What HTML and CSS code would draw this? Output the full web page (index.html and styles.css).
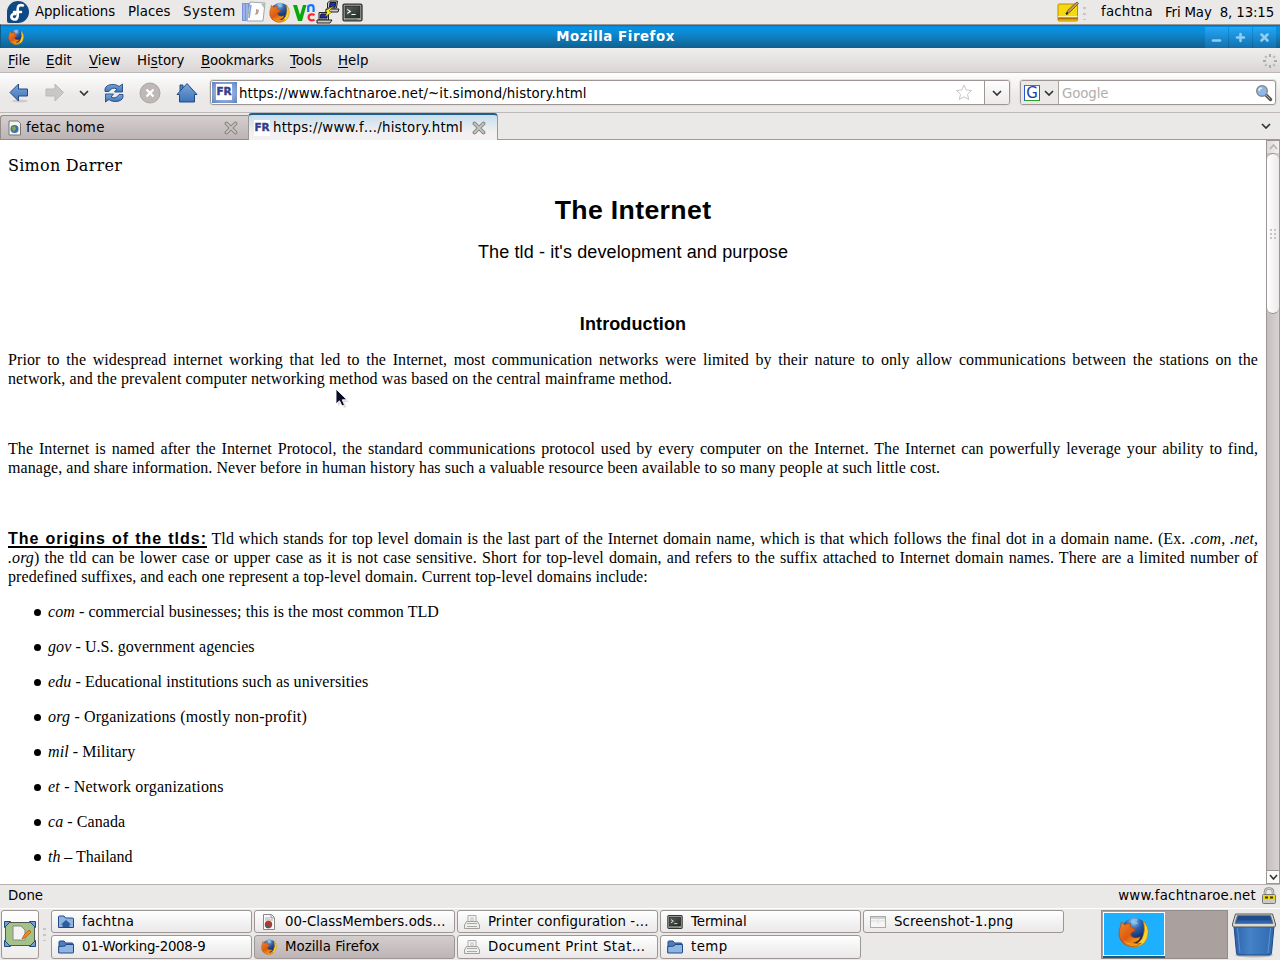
FILE: index.html
```
<!DOCTYPE html>
<html lang="en">
<head>
<meta charset="utf-8">
<title>Mozilla Firefox</title>
<link rel="stylesheet" href="styles.css">
</head>
<body>
<svg class="defs" width="0" height="0">
  <defs>
    <radialGradient id="globe" cx=".45" cy=".15" r=".75"><stop offset="0" stop-color="#8cc4f0"/><stop offset=".4" stop-color="#2b62ad"/><stop offset="1" stop-color="#0c1c58"/></radialGradient>
    <linearGradient id="flame" x1="0" y1="0" x2=".8" y2="1"><stop offset="0" stop-color="#f08a2a"/><stop offset=".55" stop-color="#dd5a10"/><stop offset="1" stop-color="#f9b21c"/></linearGradient>
    <linearGradient id="blue" x1="0" y1="0" x2="0" y2="1"><stop offset="0" stop-color="#7ba6d8"/><stop offset="1" stop-color="#3e74b8"/></linearGradient>
    <linearGradient id="bin" x1="0" y1="0" x2="1" y2="0"><stop offset="0" stop-color="#2c62a8"/><stop offset=".4" stop-color="#4582c8"/><stop offset="1" stop-color="#3068b0"/></linearGradient>
    <linearGradient id="screen" x1="0" y1="0" x2="1" y2="1"><stop offset="0" stop-color="#5a625c"/><stop offset="1" stop-color="#232a26"/></linearGradient>
  </defs>
  <symbol id="fox" viewBox="0 0 32 32">
    <circle cx="17" cy="14.500" r="13.500" fill="url(#globe)"/>
    <path d="M13 3q5-2 8-1l-2 3 2 2-4 1-3-2z" fill="#9accf0" opacity=".6"/>
    <path d="M26 4q6 6 5 13-1 10-9 13-6 2-11 0 10-1 14-8 4-9 1-18z" fill="#fbd22c" stroke="#c97d12" stroke-width=".7"/>
    <path d="M2.500 10L3.500 5 7 8q3-1.500 6-1.500l-.5 3L18 13q0 2-3 2.500-3 2-1 4.500 4 3 9 .5-1 5-7 6 5 2 8 .5-4 4-10 3.500Q4 29.500 1.200 20 .5 14 2.500 10z" fill="url(#flame)" stroke="#a8450f" stroke-width=".7"/>
    <path d="M3 17q2 10 11 11-8 1-11-11z" fill="#fbb04a"/>
  </symbol>
  <symbol id="term" viewBox="0 0 20 20">
    <rect x="1" y="2" width="18" height="16" rx="1.300" fill="#a9aba6" stroke="#30332f" stroke-width="1.300"/>
    <rect x="3" y="4" width="14" height="11" fill="url(#screen)" stroke="#222" stroke-width=".8"/>
    <path d="M5 7l3 2-3 2M9 12h4" fill="none" stroke="#fff" stroke-width="1"/>
    <path d="M3 16.600h12" stroke="#777" stroke-width="1"/><circle cx="16.300" cy="16.400" r=".8" fill="#6ad42c"/>
  </symbol>
  <symbol id="folder" viewBox="0 0 16 16">
    <path d="M1 13V3q0-1 1-1h4l1.500 2H14q1 0 1 1v8z" fill="#4b7fbe" stroke="#204a87"/>
    <path d="M.7 14V7.500L7 7l1-1.500h7.500V13.500q0 .5-.5.500z" fill="#8eb5e2" stroke="#204a87"/>
  </symbol>
  <symbol id="home" viewBox="0 0 16 16">
    <path d="M.5 13.500V3q0-1 1-1H6l1.500 2H14.500q1 0 1 1v8.500z" fill="#8eb5e2" stroke="#204a87"/>
    <path d="M8 6l5 4.500h-1.500V13h-7v-2.500H3z" fill="#2f5d9c"/>
  </symbol>
  <symbol id="printer" viewBox="0 0 16 16">
    <path d="M4 8V1.500h8V8" fill="#f5f5f4" stroke="#aaa"/><path d="M6 4h4M6 6h4" stroke="#bbb"/>
    <path d="M2.500 7.500h11l2 3.500v3.500H.5V11z" fill="#eeeeec" stroke="#a0a09d"/>
    <path d="M3 9.500h10M3 12.500h10" stroke="#aaaaa6"/>
  </symbol>
  <symbol id="x" viewBox="0 0 14 14">
    <path d="M2.500 2.500l9 9M11.500 2.500l-9 9" stroke="#7d7f78" stroke-width="3.800" stroke-linecap="round"/>
    <path d="M2.500 2.500l9 9M11.500 2.500l-9 9" stroke="#c6c3c0" stroke-width="1.900" stroke-linecap="round"/>
  </symbol>
  <symbol id="down" viewBox="0 0 10 6"><path d="M1 1l4 4 4-4" fill="none" stroke="#333" stroke-width="1.700"/></symbol>
</svg>

<div class="desktop">
  <header class="panel">
    <svg class="fedora" width="22" height="22" viewBox="0 0 22 22"><path d="M11 0a11 11 0 1 1 0 22H2q-2 0-2-2v-9A11 11 0 0 1 11 0z" fill="#0f4a84"/><path d="M16 4.500q-5-1.500-5.300 3v7.500q-.4 3.800-3.700 3.500-3-.8-2.500-3.500.6-2.300 3.500-2M7 11h7" fill="none" stroke="#fff" stroke-width="2.600" stroke-linecap="round"/></svg>
    <span class="applications">Applications</span><span class="places">Places</span><span class="system">System</span>
    <svg width="24" height="22" viewBox="0 0 24 22"><path d="M0 2h12l-3 18H0z" fill="#7793dc"/><path d="M2 3v16M5 3v16M8 3v14" stroke="#c6d2f4"/><path d="M8 1l15 1-2 18H5z" fill="#fdfdfd" stroke="#9aa"/><path d="M19 3l4-1-1 5z" fill="#bbb"/><path d="M9 4L7 17" stroke="#7da0e0" stroke-width="1.500"/><path d="M14 8l3 1-1 4-3 1 1-3z" fill="#b99c94"/></svg>
    <svg class="launch-fox" width="21" height="21"><use href="#fox"/></svg>
    <svg class="vnc" width="24" height="22" viewBox="0 0 24 22"><path d="M0 4h4l3 10 3-10h3.500L9 20H5z" fill="#08a808"/><path d="M15.200 11V4.500M15.200 6q1-2 3.200-1.800 2.200.2 2.200 2.500V11" fill="none" stroke="#1673ff" stroke-width="2.200"/><path d="M21.500 14q-1.500-.9-3.200-.7-2.700.4-2.700 3t2.700 3q1.700.2 3.200-.7" fill="none" stroke="#ff2430" stroke-width="2.200"/></svg>
    <svg class="putty" width="24" height="24" viewBox="0 0 24 24"><g stroke="#111" stroke-width=".9"><path d="M10.500 3l2-2h8l-1 7h-9z" fill="#ccc"/><path d="M13 2.500h6l-1 4.500h-5.500z" fill="#1430c8"/><path d="M9 9h13l-1 3H9z" fill="#c9c9c9"/><path d="M2 12.500h9.500V20H2z" fill="#ccc"/><path d="M4 14h6v4H3z" fill="#1430c8"/><path d="M0 20h15l-2 3H0z" fill="#c9c9c9"/><path d="M18 5l-6 6 3 1-7 5 2-5-2-1z" fill="#ffee20" stroke-width=".4"/></g></svg>
    <svg class="launch-term" width="21" height="21" viewBox="0 0 20 20"><use href="#term"/></svg>
    <div class="tray">
      <svg width="22" height="22" viewBox="0 0 22 22"><rect x="1" y="3" width="19.500" height="17" rx="1" fill="#f3d910" stroke="#c48a00"/><path d="M1 17.500h19.500" stroke="#b36a00" stroke-width="2"/><path d="M1 15.500h19.500" stroke="#fff3a0"/><path d="M9 13l2-4 9-8 1.500 1.500L13 11z" fill="#c79a5a" stroke="#6b4a1c" stroke-width=".8"/><path d="M9 13l2-1" stroke="#222" stroke-width="2"/></svg>
      <i class="grip"></i>
      <span class="user">fachtna</span><span class="clock">Fri May  8, 13:15</span>
    </div>
  </header>

  <div class="titlebar">
    <svg width="16" height="16"><use href="#fox"/></svg>
    <b>Mozilla Firefox</b>
    <div class="wm">
      <span><svg width="11" height="11"><path d="M2 8.500h7" stroke="#8fcdf2" stroke-width="2.600" stroke-linecap="round"/></svg></span>
      <span><svg width="11" height="11"><path d="M2 5.500h7M5.500 2v7" stroke="#8fcdf2" stroke-width="2.600" stroke-linecap="round"/></svg></span>
      <span><svg width="11" height="11"><path d="M2.500 2.500l6 6M8.500 2.500l-6 6" stroke="#8fcdf2" stroke-width="2.600" stroke-linecap="round"/></svg></span>
    </div>
  </div>

  <nav class="menubar">
    <span class="m1"><u>F</u>ile</span><span class="m2"><u>E</u>dit</span><span class="m3"><u>V</u>iew</span><span class="m4">Hi<u>s</u>tory</span><span class="m5"><u>B</u>ookmarks</span><span class="m6"><u>T</u>ools</span><span class="m7"><u>H</u>elp</span>
    <svg class="throbber" width="16" height="16" viewBox="0 0 16 16"><g stroke="#aaa" stroke-width="2"><path d="M8 1v3M8 12v3M1 8h3M12 8h3"/><path d="M3 3l1.800 1.800M11.200 11.200L13 13M3 13l1.800-1.800M11.200 4.800L13 3" stroke="#bbb"/></g></svg>
  </nav>

  <div class="toolbar">
    <svg width="20" height="20" viewBox="0 0 20 20"><ellipse cx="11" cy="18" rx="8" ry="1.500" fill="#0002"/><path d="M1 9.500L9.500 1v5H18.500v7H9.500v5z" fill="url(#blue)" stroke="#204a87"/></svg>
    <svg class="forward" width="20" height="20" viewBox="0 0 20 20"><path d="M18.500 9.500L10 1v5H1v7h9v5z" fill="#c9c8c7" stroke="#bbb9b8"/></svg>
    <svg class="history-arrow" width="10" height="6"><use href="#down"/></svg>
    <svg class="reload" width="20" height="20" viewBox="0 0 20 20"><g fill="url(#blue)" stroke="#204a87" stroke-width=".9"><path d="M1 8.500V6q1-4.500 8-4.500 4 0 6 2L18.500 1v8H10.500l2.500-3q-5-2.500-8 2.500z"/><path d="M19 11.500V14q-1 4.500-8 4.500-4 0-6-2L1.500 19v-8H9.500L7 14q5 2.500 8-2.500z"/></g></svg>
    <svg class="stop" width="22" height="22" viewBox="0 0 22 22"><circle cx="11" cy="11" r="10" fill="#beb8b7" stroke="#aaa6a4"/><path d="M7.500 7.500l7 7M14.500 7.500l-7 7" stroke="#fff" stroke-width="2.300"/></svg>
    <svg class="homebtn" width="22" height="22" viewBox="0 0 22 22"><path d="M4 3h3v6H4z" fill="#5b85b9" stroke="#204a87"/><path d="M11 1.500L21 12.500H18.500V20H3.500V12.500H1z" fill="url(#blue)" stroke="#204a87"/></svg>
    <div class="urlbar">
      <div class="identity"><span class="favicon">FR</span></div>
      <span class="url">https://www.fachtnaroe.net/~it.simond/history.html</span>
      <svg class="star" width="18" height="17" viewBox="0 0 18 17"><path d="M9 1l2.300 5 5.200.500-4 3.800 1.200 5.200L9 12.800l-4.700 2.700 1.200-5.200-4-3.800 5.200-.5z" fill="#fff" stroke="#c9c6c6" stroke-linejoin="round"/></svg>
      <div class="drop"><svg width="10" height="6"><use href="#down"/></svg></div>
    </div>
    <div class="search">
      <div class="engine"><span class="g">G</span><svg width="10" height="6"><use href="#down"/></svg></div>
      <span class="hint">Google</span>
      <svg width="18" height="18" viewBox="0 0 18 18"><path d="M10.500 10.500l5 5" stroke="#555" stroke-width="3.300" stroke-linecap="round"/><path d="M11 11l4 4" stroke="#aaa" stroke-width="1"/><circle cx="7" cy="7" r="5.300" fill="#8db9ea" stroke="#858a88" stroke-width="1.400"/><path d="M4 7q0-3 3-3" stroke="#e4f1ff" stroke-width="1.500" fill="none"/></svg>
    </div>
  </div>

  <div class="tabs">
    <div class="tab idle">
      <svg width="13" height="16" viewBox="0 0 13 16"><path d="M1 1h9l2.500 2.500V15H1z" fill="#f4f6ee" stroke="#777"/><circle cx="6.500" cy="9" r="4" fill="#3c6fa8"/><path d="M4 7l3-1 1 3-3 3z" fill="#8ba545"/></svg>
      <span>fetac home</span>
      <svg class="close" width="14" height="14"><use href="#x"/></svg>
    </div>
    <div class="tab active">
      <span class="favicon">FR</span>
      <span class="label">https://www.f…/history.html</span>
      <svg class="close" width="14" height="14"><use href="#x"/></svg>
    </div>
    <div class="rest"><svg width="10" height="6"><use href="#down"/></svg></div>
  </div>

  <div class="view">
    <main class="page">
      <p class="author">Simon Darrer</p>
      <h1>The Internet</h1>
      <p class="sub">The tld - it's development and purpose</p>
      <h2>Introduction</h2>
      <p class="j p1">Prior to the widespread internet working that led to the Internet, most communication networks were limited by their nature to only allow communications between the stations on the<br><span class="last">network, and the prevalent computer networking method was based on the central mainframe method.</span></p>
      <p class="j p2">The Internet is named after the Internet Protocol, the standard communications protocol used by every computer on the Internet. The Internet can powerfully leverage your ability to find,<br><span class="last">manage, and share information. Never before in human history has such a valuable resource been available to so many people at such little cost.</span></p>
      <p class="j p3"><b>The origins of the tlds:</b> Tld which stands for top level domain is the last part of the Internet domain name, which is that which follows the final dot in a domain name. (Ex. <i>.com</i>, <i>.net</i>,<br><i>.org</i>) the tld can be lower case or upper case as it is not case sensitive. Short for top-level domain, and refers to the suffix attached to Internet domain names. There are a limited number of<br><span class="last">predefined suffixes, and each one represent a top-level domain. Current top-level domains include:</span></p>
      <ul>
        <li><i>com</i> - commercial businesses; this is the most common TLD</li>
        <li><i>gov</i> - U.S. government agencies</li>
        <li><i>edu</i> - Educational institutions such as universities</li>
        <li class="wide"><i>org</i> - Organizations (mostly non-profit)</li>
        <li><i>mil</i> - Military</li>
        <li class="wide"><i>et</i> - Network organizations</li>
        <li><i>ca</i> - Canada</li>
        <li class="tight"><i>th</i> – Thailand</li>
      </ul>
    </main>
    <div class="scroll">
      <div class="arrow"><svg width="9" height="6"><path d="M1 5l3.500-4L8 5" fill="none" stroke="#b5b0af" stroke-width="1.500"/></svg></div>
      <div class="thumb"><i></i><i></i><i></i><i></i><i></i><i></i></div>
      <div class="arrow bottom"><svg width="9" height="6"><path d="M1 1l3.500 4L8 1" fill="none" stroke="#333" stroke-width="1.500"/></svg></div>
    </div>
  </div>

  <div class="status">
    <span>Done</span><span class="host">www.fachtnaroe.net</span>
    <svg width="16" height="18" viewBox="0 0 16 18"><path d="M4 9V5q0-3.500 4-3.500T12 5v4" fill="none" stroke="#888a85" stroke-width="2.500"/><path d="M4 8V5q0-3.500 4-3.500T12 5v3" fill="none" stroke="#ddd" stroke-width="1"/><rect x="1.500" y="7.500" width="13" height="9" rx="1" fill="#c8cac6" stroke="#777"/><path d="M2 10.500h12" stroke="#f1d500" stroke-width="3"/><path d="M4 10.500h3M9 10.500h3" stroke="#333" stroke-width="2"/></svg>
  </div>

  <footer class="taskbar">
    <div class="show"><svg width="32" height="26" viewBox="0 0 32 26"><rect x="1.500" y="1.500" width="29" height="23" fill="#a3c287" stroke="#555753"/><path d="M9 5h8l4 4v10H9z" fill="#f3f3f3" stroke="#888"/><path d="M18 18l2-4 5-5 2 2-5 5z" fill="#f58a1c" stroke="#a3500d" stroke-width=".7"/><g fill="#729fcf" stroke="#204a87"><path d="M.5.5h6l-6 6zM31.500.5h-6l6 6zM.5 25.500h6l-6-6zM31.500 25.500h-6l6-6z"/></g></svg></div>
    <i class="grip"></i>
    <div class="tasks">
      <div class="task"><svg width="16" height="16"><use href="#home"/></svg><span class="t1">fachtna</span></div>
      <div class="task"><svg width="16" height="16" viewBox="0 0 16 16"><path d="M2.500.5h8l3 3v12h-11z" fill="#fafafa" stroke="#888"/><path d="M10 1v3h3" stroke="#999" fill="#ddd"/><path d="M4 4h5M4 6h8" stroke="#aaa"/><circle cx="7.500" cy="10.500" r="3.700" fill="#b5382c"/><path d="M7.500 10.500l-3.500 1 1.500 2.500 3 .2z" fill="#3f5f78"/></svg><span class="t2">00-ClassMembers.ods…</span></div>
      <div class="task"><svg width="16" height="16"><use href="#printer"/></svg><span class="t2">Printer configuration -…</span></div>
      <div class="task"><svg width="16" height="16"><use href="#term"/></svg><span class="t3">Terminal</span></div>
      <div class="task"><svg width="16" height="16" viewBox="0 0 16 16"><rect x=".5" y="2.500" width="15" height="11" fill="#f6f6f4" stroke="#aaa"/><path d="M1 4h14" stroke="#9fb3ae"/><path d="M1 7h14M8 5v5" stroke="#ddd"/></svg><span class="t6">Screenshot-1.png</span></div>
      <div class="task"><svg width="16" height="16"><use href="#folder"/></svg><span class="t5">01-Working-2008-9</span></div>
      <div class="task on"><svg width="16" height="16"><use href="#fox"/></svg><span>Mozilla Firefox</span></div>
      <div class="task"><svg width="16" height="16"><use href="#printer"/></svg><span class="t4">Document Print Stat…</span></div>
      <div class="task"><svg width="16" height="16"><use href="#folder"/></svg><span class="t4">temp</span></div>
    </div>
    <div class="pager"><div class="current"><svg width="31" height="31"><use href="#fox"/></svg></div></div>
    <svg class="bin" width="46" height="46" viewBox="0 0 46 46"><ellipse cx="23" cy="43" rx="19" ry="2.500" fill="#0003"/><path d="M3 14h40l-2.500 27q-.3 2-2 2H7.500q-1.700 0-2-2z" fill="url(#bin)" stroke="#1b4a86"/><path d="M6.500 16l2.500 25M39.500 16l-2.500 25" stroke="#7fabdf" opacity=".6"/><path d="M4.500 2h37l3 10q.5 3-1.500 3H3q-2 0-1.500-3z" fill="#d7d9d5" stroke="#555753"/><path d="M6.500 3.500h33L42 11.500H4z" fill="#1f4b8c" stroke="#777"/><path d="M6 8.500l34 0 1 2.500H5z" fill="#2f63ab"/></svg>
  </footer>

  <svg class="cursor" width="14" height="22" viewBox="0 0 14 22"><path d="M3 4v14l3.500-3 2.500 5 2.500-1-2.200-5H14z" fill="#0002"/><path d="M1 1v15l3.500-3.200L7 18l2.500-1.200-2.300-5H12z" fill="#0b0b2a" stroke="#fff" stroke-width=".9"/></svg>
</div>
</body>
</html>
```
FILE: styles.css
```
* { box-sizing: border-box; }
body { margin: 0; font: 13.33px/18px "DejaVu Sans", sans-serif; color: #000; }
svg { display: block; flex: none; overflow: visible; }
span, b { flex: none; }
.defs { position: absolute; }
.desktop { position: relative; width: 1280px; height: 960px; overflow: hidden; background: #ebe9e8; display: flex; flex-direction: column; }
.desktop > * { flex: none; }

.panel { height: 24px; display: flex; align-items: center; padding-left: 7px; }
.fedora { margin-right: 6px; }
.applications { width: 93px; letter-spacing: -.12px; }
.places { width: 55px; }
.system { width: 59px; letter-spacing: .5px; }
.launch-fox { margin-left: 3px; }
.vnc { margin-left: 3px; }
.putty { margin-top: -1px; }
.launch-term { margin-left: 1px; }
.tray { margin-left: auto; display: flex; align-items: center; }
.grip { width: 3px; height: 15px; background: radial-gradient(circle, #c9c5c4 1.2px, transparent 1.6px) 0 0 / 3px 6px; }
.tray .grip { margin: 0 15px 0 4px; }
.user { width: 64px; letter-spacing: .2px; }
.clock { width: 115px; letter-spacing: -.15px; padding-top: 1px; white-space: pre; }

.titlebar { height: 24px; display: flex; align-items: center; padding: 1px 4px 0 8px; border-top: 1px solid #9a9592; border-left: 1px solid #105a8a; background: linear-gradient(#0b6aa8 0, #0094ea 2px, #0e89d2 35%, #11608f 100%); color: #fff; }
.titlebar b { flex: 1; text-align: center; margin-left: 2px; letter-spacing: .55px; }
.titlebar svg { margin-left: -1px; }
.wm { display: flex; gap: 1px; height: 21px; }
.wm span { width: 23px; display: flex; align-items: center; justify-content: center; background: linear-gradient(#22a7f8, #1470ac); }

.menubar { height: 25px; display: flex; align-items: center; padding: 1px 0 0 8px; border-bottom: 1px solid #bcb6b6; background: linear-gradient(#efeeed, #dbd6d6); }
.m1 { width: 38px; } .m2 { width: 43px; } .m3 { width: 48px; } .m4 { width: 64px; } .m5 { width: 89px; letter-spacing: -.2px; } .m6 { width: 48px; letter-spacing: -.2px; }
u { text-underline-offset: 2px; }
.throbber { margin: 0 2px 0 auto; }

.toolbar { height: 40px; display: flex; align-items: center; padding-left: 9px; border-bottom: 1px solid #bdb7b7; background: linear-gradient(#fdfdfd, #ebe9e8 60%); }
.forward { margin-left: 16px; }
.history-arrow { margin-left: 14px; }
.reload { margin-left: 15px; }
.stop { margin-left: 15px; }
.homebtn { margin-left: 15px; }
.urlbar, .search { height: 25px; display: flex; align-items: center; border: 1px solid #9e9694; border-radius: 3px; background: #fff; box-shadow: 0 0 0 1px #e2dedd; overflow: hidden; }
.urlbar { width: 800px; margin-left: 12px; }
.identity { width: 25px; height: 21px; margin-left: 1px; padding: 2px 4px; background: radial-gradient(#c7d7f6, #5b80c2); }
.favicon { display: block; width: 16px; height: 16px; background: #fff; color: #343f8c; font: bold 10.5px/15px "DejaVu Sans", sans-serif; letter-spacing: -.1px; text-align: center; -webkit-text-stroke: .4px #343f8c; }
.url { margin-left: 2px; flex: 1; padding-top: 2px; letter-spacing: .11px; }
.star { margin-right: 11px; }
.drop { width: 25px; height: 25px; border-left: 1px solid #9e9694; display: flex; align-items: center; justify-content: center; background: linear-gradient(#fff, #ece9e9); }
.search { width: 256px; margin-left: 10px; padding-right: 2px; }
.engine { width: 38px; height: 23px; display: flex; align-items: center; gap: 4px; padding-left: 3px; border-right: 1px solid #aaa3a2; background: #ebe9e8; }
.g { width: 16px; height: 16px; border: 1px solid #2a9f2a; border-left-color: #2858c8; border-right-color: #c03030; background: #fff; color: #1a3ea8; font: 15px/14px "DejaVu Sans", sans-serif; text-align: center; }
.hint { flex: 1; color: #b1aead; padding: 2px 0 0 3px; letter-spacing: -.1px; }

.tabs { height: 27px; display: flex; align-items: flex-end; }
.tab { display: flex; align-items: center; }
.idle { width: 248px; height: 25px; padding: 0 10px 0 7px; border: 1px solid #948c8b; border-width: 1px 0 1px 1px; border-radius: 3px 0 0 0; background: linear-gradient(#d5cecf, #bdb4b4); }
.idle span { margin-left: 5px; padding-top: 1px; letter-spacing: .3px; }
.close { margin-left: auto; }
.active { width: 250px; height: 27px; padding: 0 11px 0 5px; border: 1px solid #9d9593; border-top: 2px solid #1d5f8c; border-bottom: 0; border-radius: 4px 4px 0 0; background: linear-gradient(#c6dfee, #f3f0f1 70%); }
.label { margin-left: 3px; letter-spacing: .2px; }
.rest { flex: 1; height: 27px; display: flex; align-items: center; justify-content: flex-end; padding-right: 9px; border-bottom: 1px solid #9e9896; }

.view { height: 744px; display: flex; background: #fff; }
.page { width: 1266px; height: 744px; padding: 0 8px; overflow: hidden; font: 16px/19px "Liberation Serif", serif; letter-spacing: .075px; }
.page p, .page h1, .page h2, .page ul { margin: 0; }
.page .author { padding-top: 16px; font-family: "DejaVu Serif", serif; letter-spacing: .25px; }
.page h1 { margin-top: 19px; text-align: center; font: bold 26.67px/32px "Liberation Sans", sans-serif; letter-spacing: .35px; }
.page .sub { margin-top: 15px; text-align: center; font: 18px/22px "Liberation Sans", sans-serif; letter-spacing: .12px; }
.page h2 { margin-top: 50px; text-align: center; font: bold 18px/22px "Liberation Sans", sans-serif; letter-spacing: .12px; }
.j { text-align: justify; text-align-last: justify; }
.last { display: block; text-align-last: left; }
.page .p1 { margin-top: 15px; }
.page .p2 { margin-top: 51px; }
.page .p3 { margin-top: 52px; }
.p1 .last { letter-spacing: .11px; }
.p3 b { font-family: "Liberation Sans", sans-serif; letter-spacing: .98px; text-decoration: underline 2px; text-underline-offset: 2px; text-decoration-skip-ink: none; }
.page ul { margin-top: 16px; padding-left: 40px; list-style: none; }
.page li { display: flex; align-items: center; white-space: pre; margin: 0 0 16px -15px; }
.page li::before { content: ""; width: 7px; height: 7px; margin: 2px 7px 0 1px; border-radius: 50%; background: #000; }
.page .wide { letter-spacing: .19px; }
.page .tight { letter-spacing: -.04px; }

.scroll { width: 14px; height: 744px; display: flex; flex-direction: column; border: solid #9e9695; border-width: 1px 1px 0; background: linear-gradient(90deg, #c6bfbf, #d8d2d2); }
.arrow { height: 12px; display: flex; align-items: center; justify-content: center; background: linear-gradient(90deg, #dedada, #f2f0f0); }
.bottom { margin-top: auto; height: 14px; border: 1px solid #9e9695; border-width: 1px 0; background: #fafafa; }
.thumb { height: 161px; border: 1px solid #9a9392; border-width: 1px 0; border-radius: 6px; background: linear-gradient(90deg, #fff, #eceaea); display: grid; grid-template-columns: 2px 2px; gap: 2px; place-content: center; }
.thumb i { width: 2px; height: 2px; background: #c8c4c4; }

.status { height: 25px; display: flex; align-items: center; padding: 0 3px 1px 8px; border-top: 1px solid #bab2b2; border-bottom: 1px solid #fff; }
.host { margin: 0 5px 0 auto; letter-spacing: .22px; }

.taskbar { height: 51px; display: flex; padding-top: 1px; align-items: flex-start; }
.show { width: 38px; height: 49px; margin-left: 1px; border: 1px solid #9d9695; border-radius: 3px; background: linear-gradient(#fff, #eeebeb); display: flex; align-items: center; justify-content: center; padding-bottom: 2px; }
.taskbar > .grip { margin: 16px 5px 0 4px; }
.tasks { display: grid; grid-template-columns: repeat(5, 201px); grid-template-rows: 23px 24px; gap: 2px; width: 1014px; }
.task { display: flex; align-items: center; gap: 8px; padding-left: 6px; border: 1px solid #9d9695; border-radius: 3px; background: linear-gradient(#fff, #f4f3f3 50%, #eae8e8); }
.t1 { letter-spacing: .22px; }
.t2 { letter-spacing: .05px; }
.t3 { letter-spacing: -.1px; }
.t4 { letter-spacing: .45px; }
.t5 { letter-spacing: -.25px; }
.t6 { letter-spacing: .12px; }
.on { background: linear-gradient(#d4cdcd, #bdb5b5); }
.pager { width: 127px; height: 49px; margin-left: 36px; padding: 1px; border: 1px solid #948c8a; background: #aaa19f; }
.current { width: 62px; height: 44px; padding: 0 2px 4px 0; border: 1px solid #fff; background: #1db0ff; display: flex; align-items: center; justify-content: center; box-shadow: 0 2px #155a80; }
.bin { margin: 2px 0 0 3px; }
.cursor { position: absolute; left: 335px; top: 388px; }
```
